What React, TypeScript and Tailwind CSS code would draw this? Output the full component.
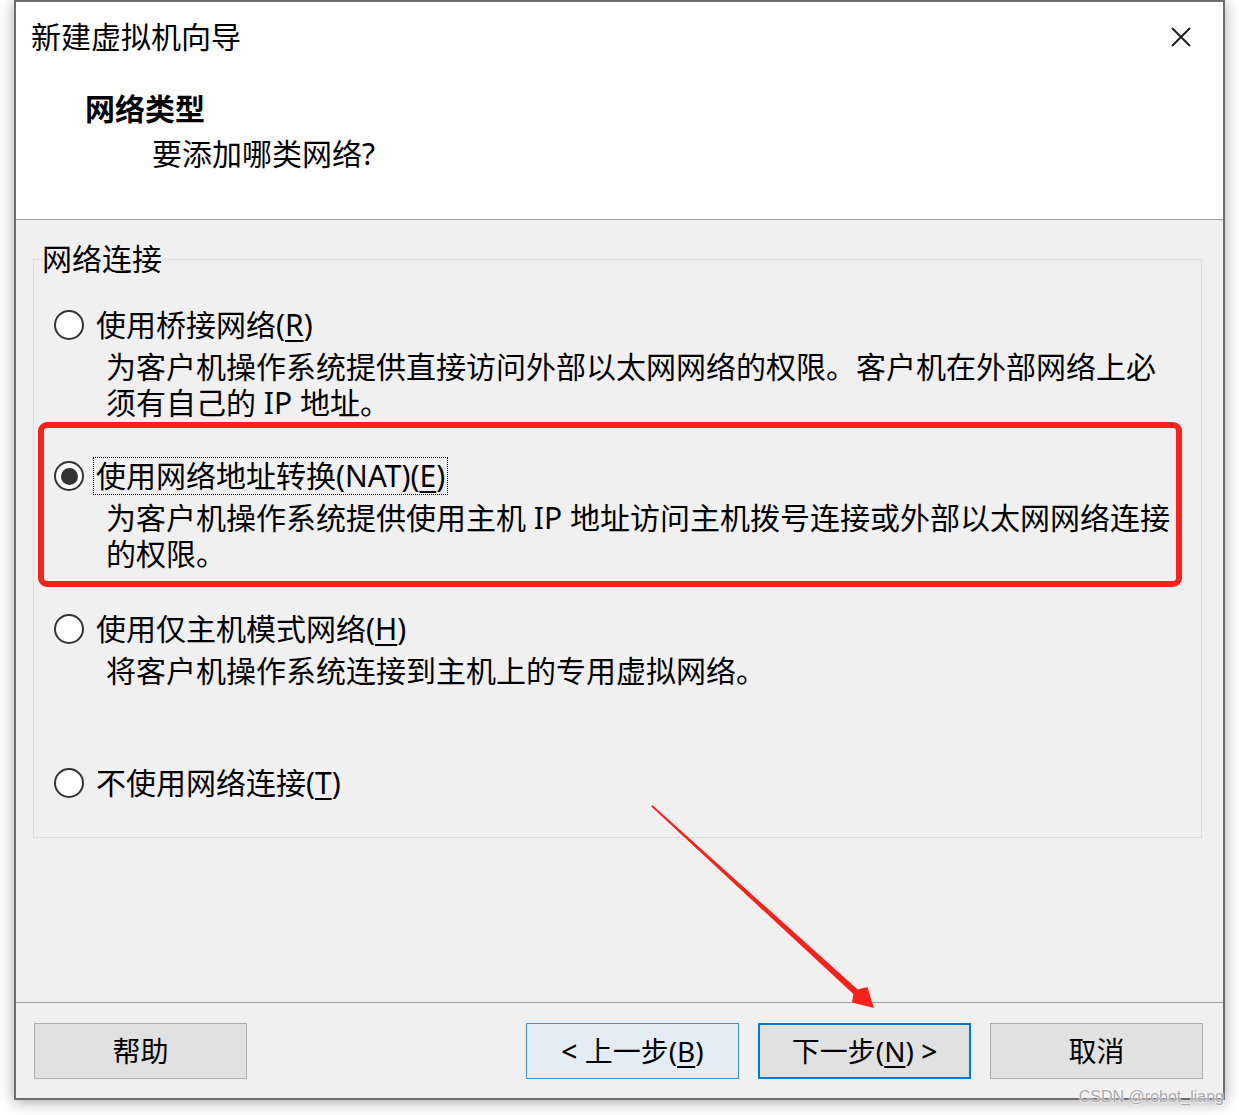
const font = "font-['Noto_Sans','Noto_Sans_CJK_SC',sans-serif]";

type Opt = { label: string; mnemonic: string; lines: string[]; h: string; checked?: boolean };

const options: Opt[] = [
  {
    label: "使用桥接网络",
    mnemonic: "R",
    lines: ["为客户机操作系统提供直接访问外部以太网网络的权限。客户机在外部网络上必", "须有自己的 IP 地址。"],
    h: "h-[151px]",
  },
  {
    label: "使用网络地址转换(NAT)",
    mnemonic: "E",
    lines: ["为客户机操作系统提供使用主机 IP 地址访问主机拨号连接或外部以太网网络连接", "的权限。"],
    h: "h-[153px]",
    checked: true,
  },
  {
    label: "使用仅主机模式网络",
    mnemonic: "H",
    lines: ["将客户机操作系统连接到主机上的专用虚拟网络。"],
    h: "h-[154px]",
  },
  { label: "不使用网络连接", mnemonic: "T", lines: [], h: "h-[38px]" },
];

const Radio = ({ checked }: { checked?: boolean }) => (
  <span className="flex items-center justify-center w-[30px] h-[30px] shrink-0 rounded-full border-2 border-[#333333] bg-white">
    {checked && <span className="w-[17px] h-[17px] rounded-full bg-[#333333]" />}
  </span>
);

const Option = ({ opt }: { opt: Opt }) => (
  <div className={`flex flex-col ${opt.h}`}>
    <div className="flex items-center h-[38px] pl-[20px]">
      <Radio checked={opt.checked} />
      <span
        className={`ml-[9px] px-[2px] leading-[36px] whitespace-nowrap border ${
          opt.checked ? "border-dotted border-black" : "border-transparent"
        }`}
      >
        {opt.label}(<span className="underline underline-offset-4 decoration-2">{opt.mnemonic}</span>)
      </span>
    </div>
    {opt.lines.length > 0 && (
      <div className="mt-[5px] pl-[72px] leading-[36px] whitespace-nowrap">
        {opt.lines.map((l) => (
          <div key={l}>{l}</div>
        ))}
      </div>
    )}
  </div>
);

const Button = ({ children, kind }: { children: React.ReactNode; kind?: "hover" | "default" }) => {
  let cls = "border border-[#adadad] bg-[#e1e1e1]";
  if (kind === "hover") cls = "border border-[#3d8ed6] bg-[#e4edf5]";
  if (kind === "default") cls = "border-2 border-[#0078d7] bg-[#e1e1e1]";
  return (
    <button className={`w-[213px] h-[56px] flex items-center justify-center text-[28px] leading-none text-black ${cls}`}>
      {children}
    </button>
  );
};

export default function App() {
  return (
    <div className={`relative w-[1239px] h-[1115px] bg-white overflow-hidden text-black ${font}`}>
      <div className="ml-[14px] w-[1211px] h-[1100px] border-2 border-[#6d6d6d] bg-[#f0f0f0] flex flex-col shadow-[0_2px_14px_rgba(0,0,0,0.35)]">
        {/* header */}
        <div className="h-[218px] bg-white border-b border-[#a0a0a0] pt-[17px]">
          <div className="flex items-center justify-between pl-[15px] pr-[32px] h-[36px]">
            <span className="text-[30px] leading-[36px]">新建虚拟机向导</span>
            <svg width="20" height="20" viewBox="0 0 20 20">
              <path d="M1 1 L19 19 M19 1 L1 19" stroke="#1f1f1f" strokeWidth="2" />
            </svg>
          </div>
          <div className="mt-[36px] pl-[69px] text-[30px] leading-[36px] font-bold">网络类型</div>
          <div className="mt-[9px] pl-[136px] text-[30px] leading-[36px]">要添加哪类网络?</div>
        </div>

        {/* body */}
        <div className="h-[782px] pl-[17px] pr-[21px] pt-[21px] text-[30px]">
          <fieldset className="border border-[#dcdcdc] pt-[29px] pb-[35px]">
            <legend className="ml-[8px] leading-[36px] text-[30px]">网络连接</legend>
            {options.map((o) => (
              <Option key={o.mnemonic} opt={o} />
            ))}
          </fieldset>
        </div>

        {/* footer */}
        <div className="flex-1 border-t border-[#a0a0a0] pt-[20px] pl-[18px] pr-[20px] flex items-start">
          <Button>帮助</Button>
          <div className="flex-1" />
          <div className="flex gap-[19px]">
            <Button kind="hover">
              <span className="font-medium">&lt;</span>&nbsp;上一步(<span className="underline underline-offset-4 decoration-2">B</span>)
            </Button>
            <Button kind="default">
              下一步(<span className="underline underline-offset-4 decoration-2">N</span>)&nbsp;<span className="font-medium">&gt;</span>
            </Button>
            <Button>取消</Button>
          </div>
        </div>
      </div>

      {/* annotation: red box */}
      <div className="absolute left-[38px] top-[422px] w-[1144px] h-[165px] border-[6px] border-[#f9221a] rounded-[9px] pointer-events-none" />

      {/* annotation: arrow */}
      <svg className="absolute left-0 top-0 pointer-events-none" width="1239" height="1115">
        <polygon
          points="651.2,806.6 853.3,994 852,1002.5 873.8,1008 867.4,987 857.6,989.6 652.6,805.2"
          fill="#f9221a"
        />
      </svg>

      {/* watermark */}
      <div className="absolute right-[15px] bottom-[10px] text-[16px] leading-none text-[#a9a9a9] font-['Liberation_Sans',sans-serif] [text-shadow:0_0_2px_#ffffff,0_0_2px_#ffffff]">
        CSDN @robot_liang
      </div>
    </div>
  );
}
